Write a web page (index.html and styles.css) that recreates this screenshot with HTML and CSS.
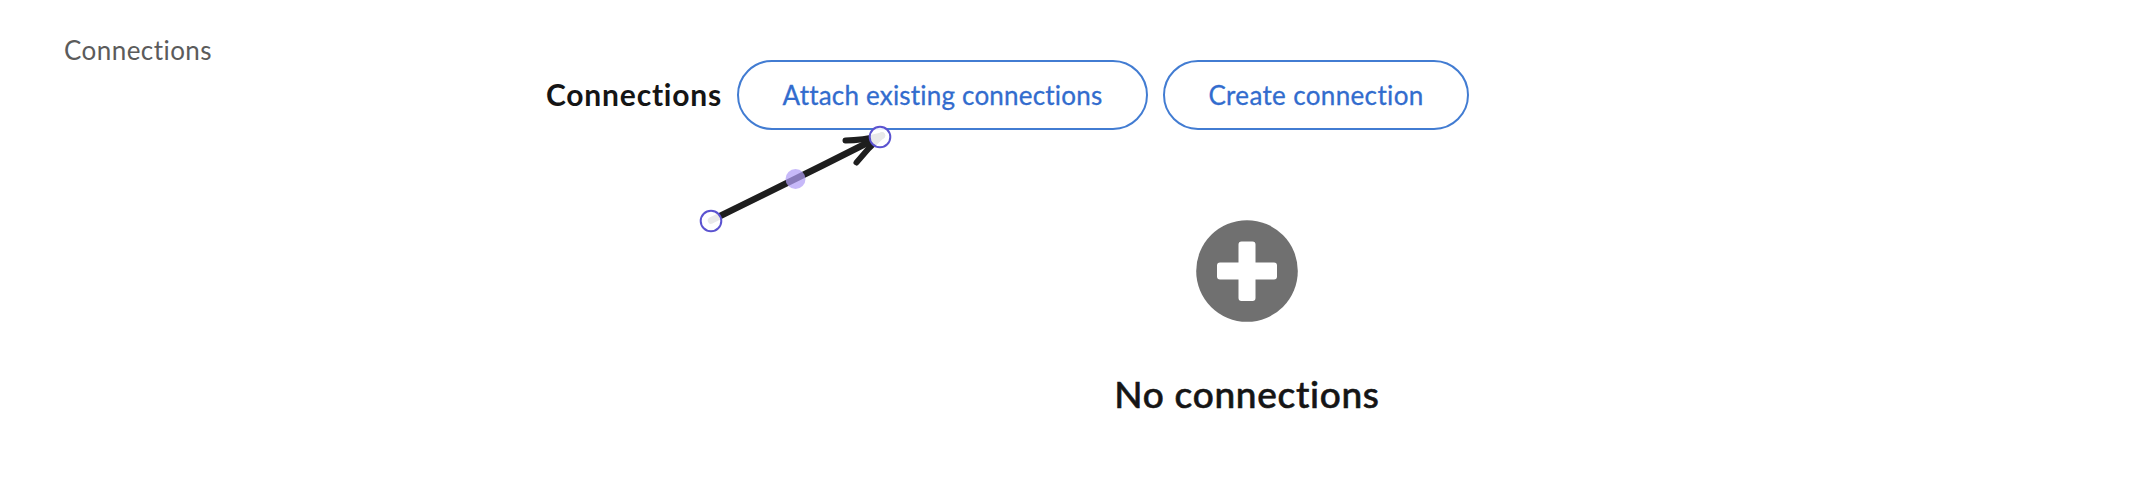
FILE: index.html
```html
<!DOCTYPE html>
<html lang="en">
<head>
<meta charset="utf-8">
<title>Connections</title>
<link rel="stylesheet" href="styles.css">
</head>
<body>
<div class="page">
  <nav class="sidebar"><a class="jump-link"><span>Connections</span></a></nav>
  <main class="section">
    <header class="toolbar">
      <h2 class="section-title"><span>Connections</span></h2>
      <button class="button button-attach"><span>Attach existing connections</span></button>
      <button class="button button-create"><span>Create connection</span></button>
    </header>
    <div class="empty-state">
      <svg class="empty-icon" viewBox="0 0 102 102"><circle cx="51" cy="51" r="50.800" fill="#707070"/><path d="M45.500 21.500h11q3 0 3 3V42.500H78q3 0 3 3v11q0 3-3 3H59.500V78q0 3-3 3h-11q-3 0-3-3V59.500H24q-3 0-3-3v-11q0-3 3-3h18.500V24.500q0-3 3-3z" fill="#fff"/></svg>
      <h3 class="empty-title"><span>No connections</span></h3>
    </div>
  </main>
  <svg class="arrow" viewBox="690 110 220 130">
    <g fill="none" stroke="#1e1e1e" stroke-width="6.500" stroke-linecap="round" stroke-linejoin="round">
      <path d="M711 220.500Q796 179 882 135.500"/>
      <path stroke-width="6" d="M845.500 140.500Q862 140.500 882 135.500"/>
      <path stroke-width="6" d="M856.500 162.500Q868 148 882 135.500"/>
    </g>
    <g fill="#fff" fill-opacity=".9" stroke="#5b53d0" stroke-width="2">
      <circle cx="711" cy="221" r="10.300"/>
      <circle cx="880" cy="137" r="10.300"/>
    </g>
    <circle cx="795.500" cy="179" r="10" fill="#b19ef7" fill-opacity=".72"/>
  </svg>
</div>
</body>
</html>
```
FILE: styles.css
```css
* { box-sizing: border-box; }
body { margin: 0; background: #fff; font-family: Lato, "Liberation Sans", sans-serif; }
.page { position: relative; display: flex; width: 2134px; height: 502px; overflow: hidden; }
.sidebar { width: 546px; padding: 34px 0 0 64px; }
.jump-link { display: block; font-size: 26px; line-height: 32px; color: #5b5b5b; letter-spacing: 0.45px; }
.section { width: 1400px; }
.toolbar { display: flex; align-items: center; height: 70px; margin-top: 60px; }
.section-title { width: 191px; margin: 0; padding-bottom: 3px; font-size: 30px; line-height: 36px; font-weight: 700; color: #151515; letter-spacing: 0.8px; white-space: nowrap; }
.button { display: flex; align-items: center; justify-content: center; height: 70px; padding: 0; border: 2px solid #427cd2; border-radius: 35px; background: #fff; font: 400 26px/32px Lato, "Liberation Sans", sans-serif; color: #326cce; letter-spacing: 0.2px; white-space: nowrap; -webkit-text-stroke: 0.3px #326cce; }
.button-attach { width: 411px; margin-right: 15px; }
.button-create { width: 306px; letter-spacing: 0.35px; }
.empty-state { display: flex; flex-direction: column; align-items: center; width: 1402px; padding-top: 90px; }
.empty-icon { width: 102px; height: 102px; }
.empty-title { margin: 48px 0 0; font-size: 37px; line-height: 48px; font-weight: 500; color: #151515; letter-spacing: 0.7px; -webkit-text-stroke: 0.6px #151515; }
.arrow { position: absolute; left: 690px; top: 110px; width: 220px; height: 130px; }
```
